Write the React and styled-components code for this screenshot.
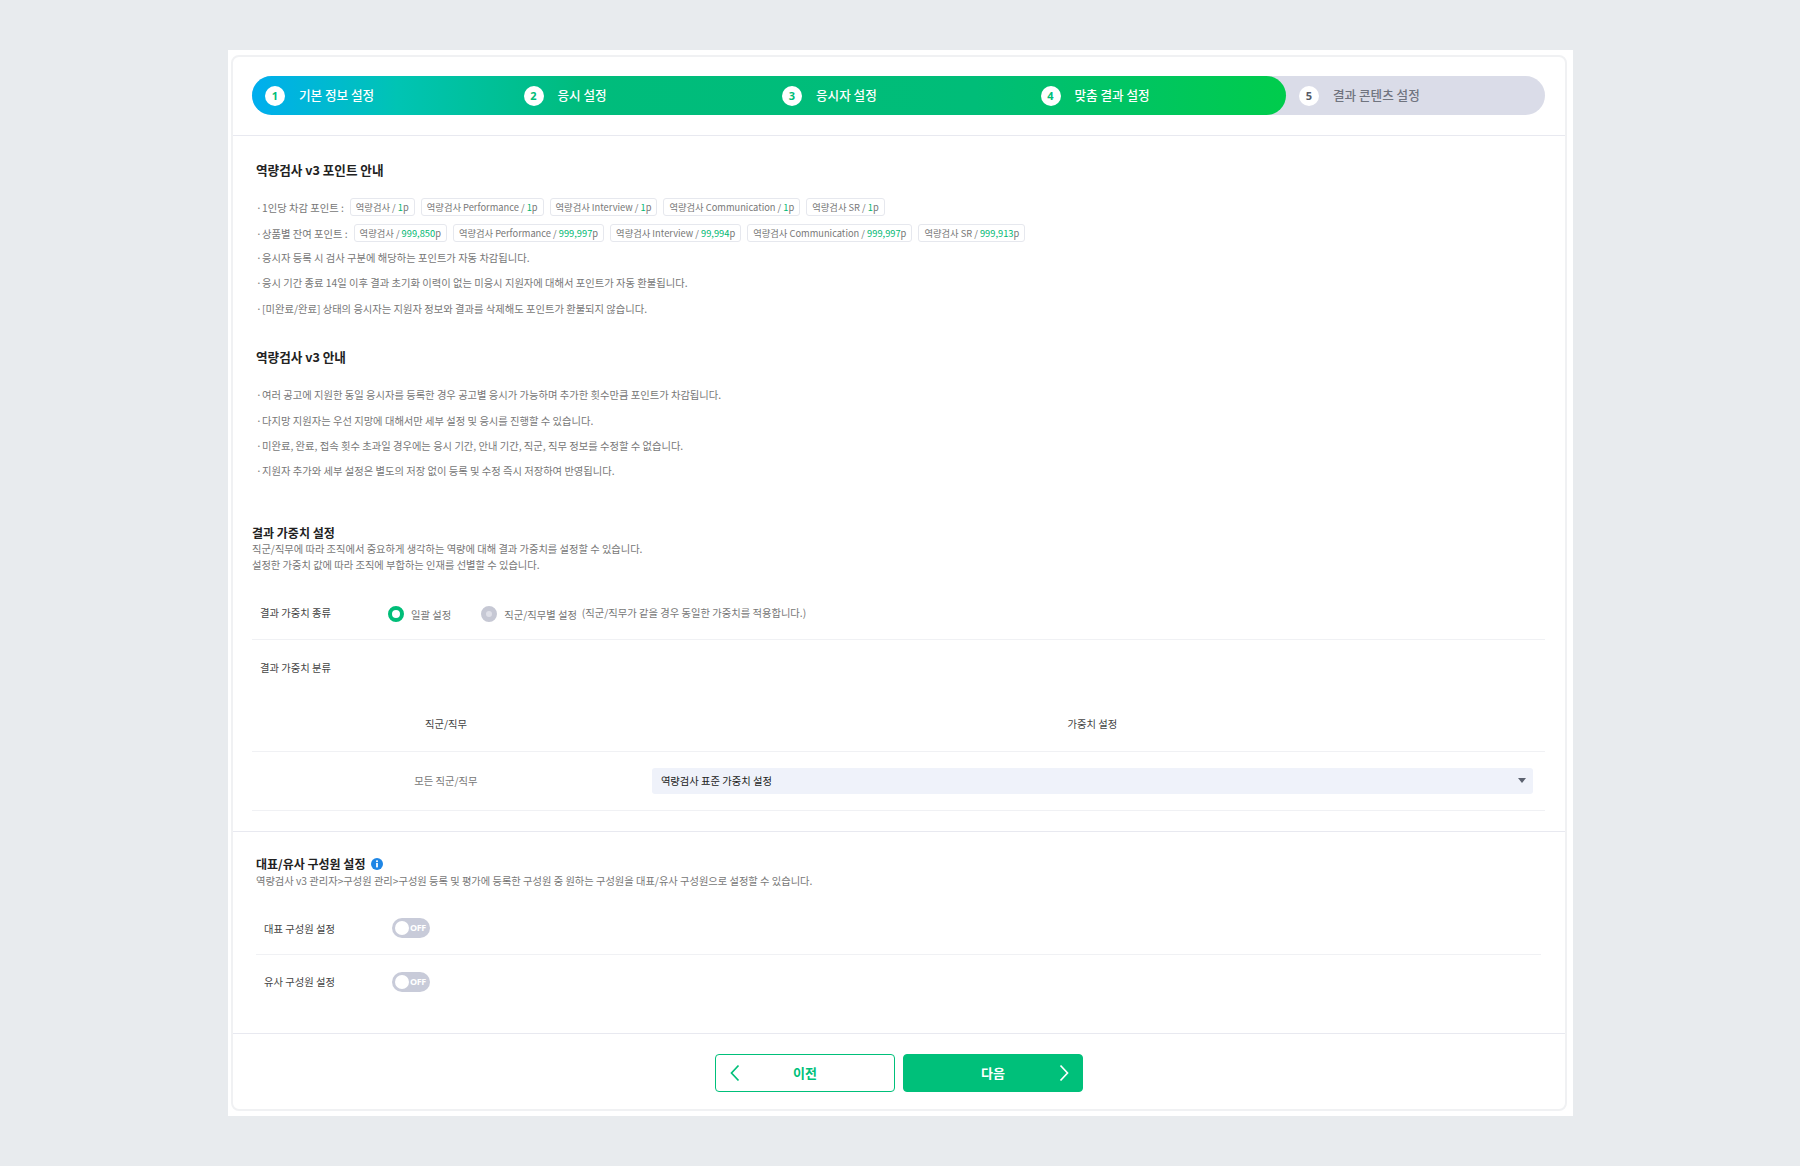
import React from "react";
import styled, { createGlobalStyle } from "styled-components";

const Global = createGlobalStyle`
  html, body { margin: 0; padding: 0; background: #e8ebee; }
  body { font-family: "Noto Sans CJK KR", "Noto Sans", sans-serif; color: #777; }
  * { box-sizing: border-box; }
`;

const Page = styled.div`
  width: 1800px;
  height: 1166px;
  padding: 50px 227px 50px 228px;
`;
const Sheet = styled.div`
  width: 1345px;
  height: 1066px;
  background: #fff;
  padding: 5px 6px 5px 3px;
`;
const Card = styled.div`
  height: 100%;
  border: 2px solid #f0f1f3;
  border-radius: 8px;
  display: flex;
  flex-direction: column;
`;
const StepHeader = styled.div`
  height: 79px;
  padding: 19px 20px 0 19px;
  border-bottom: 1px solid #e8e9f0;
  flex: none;
`;
const StepBar = styled.div`
  height: 39px;
  border-radius: 20px;
  background: #dadce8;
  display: flex;
`;
const DoneSteps = styled.div`
  flex: 4;
  display: flex;
  border-radius: 20px;
  background: linear-gradient(90deg, #00aeef 0%, #00c4b4 14%, #00bc7c 32%, #00bd78 70%, #00cc4c 100%);
`;
const Step = styled.div`
  flex: ${p => (p.$last ? "0 0 259px" : "1 1 0")};
  display: flex;
  align-items: center;
  padding-left: 13px;
  gap: 14px;
  font-size: 12.6px;
  font-weight: 500;
  color: ${p => (p.$off ? "#70747f" : "#fff")};
`;
const StepText = styled.span`
  margin-bottom: 2px;
`;
const StepNum = styled.span`
  width: 20px;
  height: 20px;
  border-radius: 50%;
  background: #fff;
  color: ${p => (p.$off ? "#555a66" : "#00bd78")};
  display: flex;
  align-items: center;
  justify-content: center;
  font: 700 11px "Noto Sans", sans-serif;
`;
const Section = styled.section`
  padding: ${p => p.$pad || "0"};
  flex: none;
`;
const Title = styled.h2`
  margin: 0;
  font-size: 12.6px;
  line-height: 20px;
  font-weight: 700;
  color: #222;
`;
const InfoList = styled.div`
  margin-top: ${p => p.$top || "14px"};
  display: flex;
  flex-direction: column;
`;
const Line = styled.div`
  height: 25.4px;
  line-height: 25.4px;
  font-size: 10.3px;
  color: #777;
  &::before {
    content: "·";
    display: inline-block;
    width: 5px;
    margin-right: 1px;
  }
`;
const ChipLine = styled.div`
  height: 26px;
  display: flex;
  align-items: center;
  gap: 6px;
  font-size: 10.3px;
  color: #777;
  &:nth-child(2) { margin-bottom: -1px; }
`;
const ChipLabel = styled.span`
  &::before {
    content: "·";
    display: inline-block;
    width: 5px;
    margin-right: 1px;
  }
`;
const Chip = styled.span`
  height: 18px;
  line-height: 16px;
  padding: 0 5px;
  border: 1px solid #e6e8ee;
  border-radius: 3px;
  font-size: 9.3px;
  color: #777;
  white-space: nowrap;
`;
const Pts = styled.em`
  font-style: normal;
  color: #00b873;
`;
const Desc = styled.p`
  margin: 0;
  font-size: 10.25px;
  line-height: 16px;
  color: #777;
`;
const SubTitle = styled(Title)`
  font-size: 12px;
  line-height: 16px;
`;
const OptionRow = styled.div`
  height: 49px;
  margin-top: 18px;
  padding: 0 8px 5px;
  display: flex;
  align-items: center;
  border-bottom: 1px solid #f0f1f4;
`;
const RowLabel = styled.span`
  font-size: 10.3px;
  font-weight: 400;
  color: #444;
  width: ${p => p.$w || "128px"};
  flex: none;
`;
const RadioItem = styled.label`
  display: flex;
  align-items: center;
  gap: 7px;
  margin-right: ${p => p.$mr || "0"};
  font-size: 10.3px;
  color: #777;
  position: relative;
  top: 2px;
`;
const RadioDot = styled.span`
  width: 16px;
  height: 16px;
  border-radius: 50%;
  flex: none;
  background: ${p => (p.$on ? "#fff" : "#dfe0e8")};
  border: ${p => (p.$on ? "4.5px solid #00bd78" : "5px solid #c6c8d4")};
`;
const RadioNote = styled.span`
  font-size: 10.3px;
  color: #777;
  margin-left: 5px;
`;
const LabelRow = styled.div`
  height: 56px;
  padding: 0 8px;
  display: flex;
  align-items: center;
`;
const WeightTable = styled.div`
  display: grid;
  grid-template-columns: 30% 70%;
  font-size: 10.3px;
`;
const HeadCell = styled.div`
  height: 56px;
  display: flex;
  align-items: center;
  justify-content: center;
  color: #444;
  border-bottom: 1px solid #f0f1f4;
`;
const BodyCell = styled.div`
  height: 59px;
  display: flex;
  align-items: center;
  justify-content: center;
  color: #777;
  padding: 0 12px;
  border-bottom: 1px solid #f0f1f4;
`;
const SelectBox = styled.div`
  width: 100%;
  height: 26px;
  padding: 0 7px 0 9px;
  background: #eff2fa;
  border-radius: 3px;
  display: flex;
  align-items: center;
  justify-content: space-between;
  color: #222;
`;
const Divider = styled.div`
  margin-top: ${p => p.$top || "0"};
  height: 1px;
  background: #e8e9f0;
  flex: none;
`;
const TitleRow = styled.div`
  height: 18px;
  display: flex;
  align-items: center;
  gap: 6px;
`;
const MemberTitle = styled(Title)`
  font-size: 12px;
`;
const ToggleRow = styled.div`
  height: ${p => p.$h};
  display: flex;
  align-items: center;
  padding: ${p => p.$pad};
  border-bottom: ${p => (p.$line ? "1px solid #f0f1f4" : "none")};
`;
const Toggle = styled.span`
  width: 38px;
  height: 20px;
  border-radius: 10px;
  background: #c8cbd9;
  position: relative;
  display: block;
  &::before {
    content: "";
    position: absolute;
    left: 3px;
    top: 3px;
    width: 14px;
    height: 14px;
    border-radius: 50%;
    background: #fff;
  }
  &::after {
    content: "OFF";
    position: absolute;
    left: 18px;
    top: 4px;
    font: 700 9px/11px "Noto Sans", sans-serif;
    letter-spacing: -0.4px;
    color: #fff;
  }
`;
const Footer = styled.div`
  flex: none;
  display: flex;
  justify-content: center;
  gap: 8px;
  padding-top: 20px;
`;
const NavButton = styled.button`
  width: 180px;
  height: 38px;
  border-radius: 4px;
  border: 1px solid #00c07a;
  background: ${p => (p.$solid ? "#00c07a" : "#fff")};
  color: ${p => (p.$solid ? "#fff" : "#00c07a")};
  font-family: inherit;
  font-size: 13px;
  font-weight: 700;
  position: relative;
  padding: 0;
  display: flex;
  align-items: center;
  justify-content: center;
  svg {
    position: absolute;
    top: 9px;
    ${p => (p.$solid ? "right: 13px;" : "left: 14px;")}
  }
`;

const Chevron = ({ right }) => (
  <svg width="10" height="18" viewBox="0 0 10 18" fill="none">
    <path d={right ? "M1.5 1.5 L8.5 9 L1.5 16.5" : "M8.5 1.5 L1.5 9 L8.5 16.5"} stroke="currentColor" strokeWidth="1.7" />
  </svg>
);
const Caret = () => (
  <svg width="8" height="5" viewBox="0 0 8 5"><path d="M0 0h8L4 5z" fill="#5c6270" /></svg>
);
const InfoIcon = () => (
  <svg width="12" height="12" viewBox="0 0 12 12">
    <circle cx="6" cy="6" r="6" fill="#1f86e5" />
    <rect x="5.1" y="5" width="1.8" height="4.4" fill="#fff" />
    <rect x="5.1" y="2.4" width="1.8" height="1.7" fill="#fff" />
  </svg>
);

const steps = ["기본 정보 설정", "응시 설정", "응시자 설정", "맞춤 결과 설정"];
const costs = [["역량검사", "1"], ["역량검사 Performance", "1"], ["역량검사 Interview", "1"], ["역량검사 Communication", "1"], ["역량검사 SR", "1"]];
const balances = [["역량검사", "999,850"], ["역량검사 Performance", "999,997"], ["역량검사 Interview", "99,994"], ["역량검사 Communication", "999,997"], ["역량검사 SR", "999,913"]];

const PointChips = ({ items }) =>
  items.map(([name, value]) => (
    <Chip key={name}>{name} / <Pts>{value}</Pts>p</Chip>
  ));

export default function App() {
  return (
    <Page>
      <Global />
      <Sheet>
        <Card>
          <StepHeader>
            <StepBar>
              <DoneSteps>
                {steps.map((s, i) => (
                  <Step key={s}><StepNum>{i + 1}</StepNum><StepText>{s}</StepText></Step>
                ))}
              </DoneSteps>
              <Step $last $off><StepNum $off>5</StepNum><StepText>결과 콘텐츠 설정</StepText></Step>
            </StepBar>
          </StepHeader>

          <Section $pad="24px 0 0 23px">
            <Title>역량검사 v3 포인트 안내</Title>
            <InfoList>
              <ChipLine><ChipLabel>1인당 차감 포인트 :</ChipLabel><PointChips items={costs} /></ChipLine>
              <ChipLine><ChipLabel>상품별 잔여 포인트 :</ChipLabel><PointChips items={balances} /></ChipLine>
              <Line>응시자 등록 시 검사 구분에 해당하는 포인트가 자동 차감됩니다.</Line>
              <Line>응시 기간 종료 14일 이후 결과 초기화 이력이 없는 미응시 지원자에 대해서 포인트가 자동 환불됩니다.</Line>
              <Line>[미완료/완료] 상태의 응시자는 지원자 정보와 결과를 삭제해도 포인트가 환불되지 않습니다.</Line>
            </InfoList>
          </Section>

          <Section $pad="26px 0 0 23px">
            <Title>역량검사 v3 안내</Title>
            <InfoList $top="15px">
              <Line>여러 공고에 지원한 동일 응시자를 등록한 경우 공고별 응시가 가능하며 추가한 횟수만큼 포인트가 차감됩니다.</Line>
              <Line>다지망 지원자는 우선 지망에 대해서만 세부 설정 및 응시를 진행할 수 있습니다.</Line>
              <Line>미완료, 완료, 접속 횟수 초과일 경우에는 응시 기간, 안내 기간, 직군, 직무 정보를 수정할 수 없습니다.</Line>
              <Line>지원자 추가와 세부 설정은 별도의 저장 없이 등록 및 수정 즉시 저장하여 반영됩니다.</Line>
            </InfoList>
          </Section>

          <Section $pad="41px 20px 0 19px">
            <SubTitle>결과 가중치 설정</SubTitle>
            <Desc>직군/직무에 따라 조직에서 중요하게 생각하는 역량에 대해 결과 가중치를 설정할 수 있습니다.</Desc>
            <Desc>설정한 가중치 값에 따라 조직에 부합하는 인재를 선별할 수 있습니다.</Desc>
            <OptionRow>
              <RowLabel>결과 가중치 종류</RowLabel>
              <RadioItem $mr="30px"><RadioDot $on />일괄 설정</RadioItem>
              <RadioItem><RadioDot />직군/직무별 설정</RadioItem>
              <RadioNote>(직군/직무가 같을 경우 동일한 가중치를 적용합니다.)</RadioNote>
            </OptionRow>
            <LabelRow><RowLabel>결과 가중치 분류</RowLabel></LabelRow>
            <WeightTable>
              <HeadCell>직군/직무</HeadCell>
              <HeadCell>가중치 설정</HeadCell>
              <BodyCell>모든 직군/직무</BodyCell>
              <BodyCell><SelectBox>역량검사 표준 가중치 설정<Caret /></SelectBox></BodyCell>
            </WeightTable>
          </Section>

          <Divider $top="20px" />

          <Section $pad="23px 24px 0 23px">
            <TitleRow><MemberTitle>대표/유사 구성원 설정</MemberTitle><InfoIcon /></TitleRow>
            <Desc>역량검사 v3 관리자&gt;구성원 관리&gt;구성원 등록 및 평가에 등록한 구성원 중 원하는 구성원을 대표/유사 구성원으로 설정할 수 있습니다.</Desc>
            <ToggleRow $h="66px" $line $pad="14px 0 0 8px"><RowLabel>대표 구성원 설정</RowLabel><Toggle /></ToggleRow>
            <ToggleRow $h="54px" $pad="0 0 0 8px"><RowLabel>유사 구성원 설정</RowLabel><Toggle /></ToggleRow>
          </Section>

          <Divider $top="24px" />

          <Footer>
            <NavButton><Chevron />이전</NavButton>
            <NavButton $solid>다음<Chevron right /></NavButton>
          </Footer>
        </Card>
      </Sheet>
    </Page>
  );
}
